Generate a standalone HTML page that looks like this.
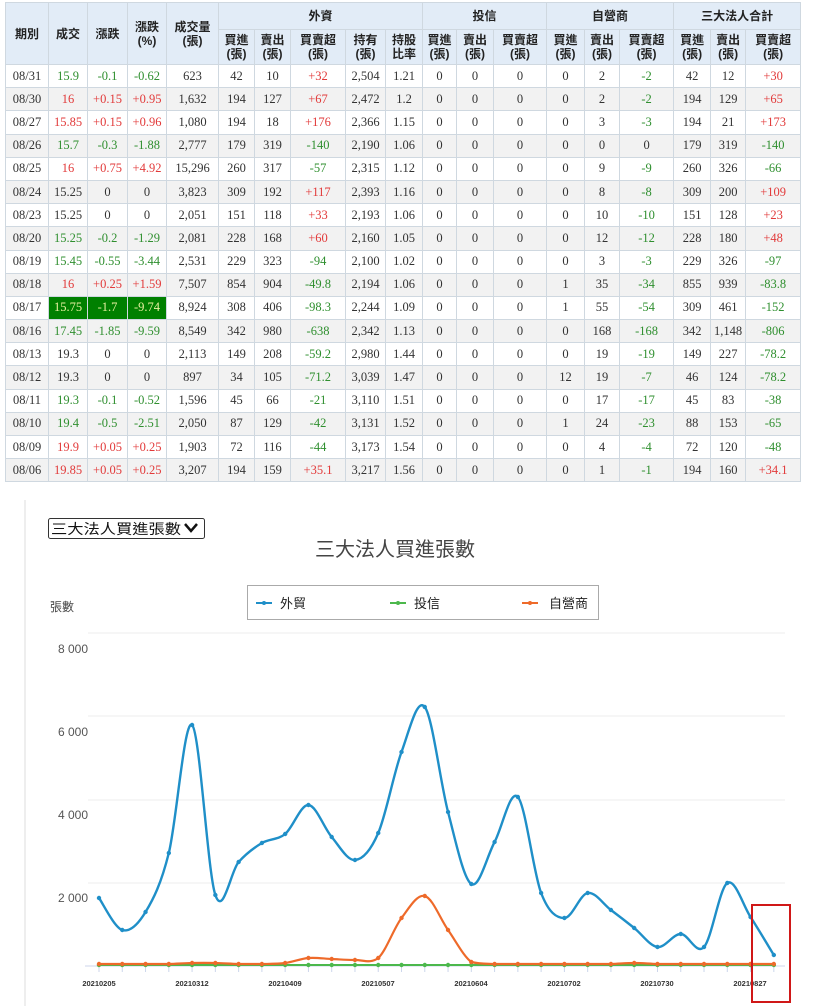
<!DOCTYPE html>
<html><head><meta charset="utf-8">
<style>
*{margin:0;padding:0;box-sizing:border-box}
body{width:819px;height:1006px;background:#fff;position:relative;overflow:hidden;font-family:"Liberation Serif","Noto Serif CJK SC",serif}
table{position:absolute;left:5px;top:2px;width:795px;border-collapse:collapse;table-layout:fixed;font-size:12.5px;color:#333}
td,th{border:1px solid #cfd8e0;text-align:center;padding:0;white-space:nowrap;overflow:hidden}
th{background:#e2ecf7;font-family:"Liberation Sans","Noto Sans CJK TC",sans-serif;font-weight:bold;font-size:12px;line-height:14px;color:#222}
tr.h1 th{height:27px}
tr.h2 th{height:35px}
tbody td{height:23.2px}
tbody tr:nth-child(even) td{background:#f2f2f2}
.r{color:#e23a3a}.g{color:#2f8f2f}
td.G{background:#008000!important;color:#e8f0a0}
svg text{font-family:"Liberation Sans","Noto Sans CJK TC",sans-serif}
</style></head><body>
<table>
<colgroup><col style="width:43px"><col style="width:39px"><col style="width:40px"><col style="width:39px"><col style="width:52px"><col style="width:36px"><col style="width:36px"><col style="width:55px"><col style="width:40px"><col style="width:37px"><col style="width:34px"><col style="width:37px"><col style="width:53px"><col style="width:38px"><col style="width:35px"><col style="width:54px"><col style="width:37px"><col style="width:35px"><col style="width:55px"></colgroup>
<thead>
<tr class="h1"><th rowspan="2">期別</th><th rowspan="2">成交</th><th rowspan="2">漲跌</th><th rowspan="2">漲跌<br>(%)</th><th rowspan="2">成交量<br>(張)</th><th colspan="5">外資</th><th colspan="3">投信</th><th colspan="3">自營商</th><th colspan="3">三大法人合計</th></tr>
<tr class="h2"><th>買進<br>(張)</th><th>賣出<br>(張)</th><th>買賣超<br>(張)</th><th>持有<br>(張)</th><th>持股<br>比率</th><th>買進<br>(張)</th><th>賣出<br>(張)</th><th>買賣超<br>(張)</th><th>買進<br>(張)</th><th>賣出<br>(張)</th><th>買賣超<br>(張)</th><th>買進<br>(張)</th><th>賣出<br>(張)</th><th>買賣超<br>(張)</th></tr>
</thead>
<tbody>
<tr><td>08/31</td><td class="g">15.9</td><td class="g">-0.1</td><td class="g">-0.62</td><td>623</td><td>42</td><td>10</td><td class="r">+32</td><td>2,504</td><td>1.21</td><td>0</td><td>0</td><td>0</td><td>0</td><td>2</td><td class="g">-2</td><td>42</td><td>12</td><td class="r">+30</td></tr>
<tr><td>08/30</td><td class="r">16</td><td class="r">+0.15</td><td class="r">+0.95</td><td>1,632</td><td>194</td><td>127</td><td class="r">+67</td><td>2,472</td><td>1.2</td><td>0</td><td>0</td><td>0</td><td>0</td><td>2</td><td class="g">-2</td><td>194</td><td>129</td><td class="r">+65</td></tr>
<tr><td>08/27</td><td class="r">15.85</td><td class="r">+0.15</td><td class="r">+0.96</td><td>1,080</td><td>194</td><td>18</td><td class="r">+176</td><td>2,366</td><td>1.15</td><td>0</td><td>0</td><td>0</td><td>0</td><td>3</td><td class="g">-3</td><td>194</td><td>21</td><td class="r">+173</td></tr>
<tr><td>08/26</td><td class="g">15.7</td><td class="g">-0.3</td><td class="g">-1.88</td><td>2,777</td><td>179</td><td>319</td><td class="g">-140</td><td>2,190</td><td>1.06</td><td>0</td><td>0</td><td>0</td><td>0</td><td>0</td><td>0</td><td>179</td><td>319</td><td class="g">-140</td></tr>
<tr><td>08/25</td><td class="r">16</td><td class="r">+0.75</td><td class="r">+4.92</td><td>15,296</td><td>260</td><td>317</td><td class="g">-57</td><td>2,315</td><td>1.12</td><td>0</td><td>0</td><td>0</td><td>0</td><td>9</td><td class="g">-9</td><td>260</td><td>326</td><td class="g">-66</td></tr>
<tr><td>08/24</td><td>15.25</td><td>0</td><td>0</td><td>3,823</td><td>309</td><td>192</td><td class="r">+117</td><td>2,393</td><td>1.16</td><td>0</td><td>0</td><td>0</td><td>0</td><td>8</td><td class="g">-8</td><td>309</td><td>200</td><td class="r">+109</td></tr>
<tr><td>08/23</td><td>15.25</td><td>0</td><td>0</td><td>2,051</td><td>151</td><td>118</td><td class="r">+33</td><td>2,193</td><td>1.06</td><td>0</td><td>0</td><td>0</td><td>0</td><td>10</td><td class="g">-10</td><td>151</td><td>128</td><td class="r">+23</td></tr>
<tr><td>08/20</td><td class="g">15.25</td><td class="g">-0.2</td><td class="g">-1.29</td><td>2,081</td><td>228</td><td>168</td><td class="r">+60</td><td>2,160</td><td>1.05</td><td>0</td><td>0</td><td>0</td><td>0</td><td>12</td><td class="g">-12</td><td>228</td><td>180</td><td class="r">+48</td></tr>
<tr><td>08/19</td><td class="g">15.45</td><td class="g">-0.55</td><td class="g">-3.44</td><td>2,531</td><td>229</td><td>323</td><td class="g">-94</td><td>2,100</td><td>1.02</td><td>0</td><td>0</td><td>0</td><td>0</td><td>3</td><td class="g">-3</td><td>229</td><td>326</td><td class="g">-97</td></tr>
<tr><td>08/18</td><td class="r">16</td><td class="r">+0.25</td><td class="r">+1.59</td><td>7,507</td><td>854</td><td>904</td><td class="g">-49.8</td><td>2,194</td><td>1.06</td><td>0</td><td>0</td><td>0</td><td>1</td><td>35</td><td class="g">-34</td><td>855</td><td>939</td><td class="g">-83.8</td></tr>
<tr><td>08/17</td><td class="G">15.75</td><td class="G">-1.7</td><td class="G">-9.74</td><td>8,924</td><td>308</td><td>406</td><td class="g">-98.3</td><td>2,244</td><td>1.09</td><td>0</td><td>0</td><td>0</td><td>1</td><td>55</td><td class="g">-54</td><td>309</td><td>461</td><td class="g">-152</td></tr>
<tr><td>08/16</td><td class="g">17.45</td><td class="g">-1.85</td><td class="g">-9.59</td><td>8,549</td><td>342</td><td>980</td><td class="g">-638</td><td>2,342</td><td>1.13</td><td>0</td><td>0</td><td>0</td><td>0</td><td>168</td><td class="g">-168</td><td>342</td><td>1,148</td><td class="g">-806</td></tr>
<tr><td>08/13</td><td>19.3</td><td>0</td><td>0</td><td>2,113</td><td>149</td><td>208</td><td class="g">-59.2</td><td>2,980</td><td>1.44</td><td>0</td><td>0</td><td>0</td><td>0</td><td>19</td><td class="g">-19</td><td>149</td><td>227</td><td class="g">-78.2</td></tr>
<tr><td>08/12</td><td>19.3</td><td>0</td><td>0</td><td>897</td><td>34</td><td>105</td><td class="g">-71.2</td><td>3,039</td><td>1.47</td><td>0</td><td>0</td><td>0</td><td>12</td><td>19</td><td class="g">-7</td><td>46</td><td>124</td><td class="g">-78.2</td></tr>
<tr><td>08/11</td><td class="g">19.3</td><td class="g">-0.1</td><td class="g">-0.52</td><td>1,596</td><td>45</td><td>66</td><td class="g">-21</td><td>3,110</td><td>1.51</td><td>0</td><td>0</td><td>0</td><td>0</td><td>17</td><td class="g">-17</td><td>45</td><td>83</td><td class="g">-38</td></tr>
<tr><td>08/10</td><td class="g">19.4</td><td class="g">-0.5</td><td class="g">-2.51</td><td>2,050</td><td>87</td><td>129</td><td class="g">-42</td><td>3,131</td><td>1.52</td><td>0</td><td>0</td><td>0</td><td>1</td><td>24</td><td class="g">-23</td><td>88</td><td>153</td><td class="g">-65</td></tr>
<tr><td>08/09</td><td class="r">19.9</td><td class="r">+0.05</td><td class="r">+0.25</td><td>1,903</td><td>72</td><td>116</td><td class="g">-44</td><td>3,173</td><td>1.54</td><td>0</td><td>0</td><td>0</td><td>0</td><td>4</td><td class="g">-4</td><td>72</td><td>120</td><td class="g">-48</td></tr>
<tr><td>08/06</td><td class="r">19.85</td><td class="r">+0.05</td><td class="r">+0.25</td><td>3,207</td><td>194</td><td>159</td><td class="r">+35.1</td><td>3,217</td><td>1.56</td><td>0</td><td>0</td><td>0</td><td>0</td><td>1</td><td class="g">-1</td><td>194</td><td>160</td><td class="r">+34.1</td></tr>
</tbody></table>

<svg width="819" height="1006" style="position:absolute;left:0;top:0" xmlns="http://www.w3.org/2000/svg">
<line x1="25" y1="500" x2="25" y2="1006" stroke="#ddd"/>
<rect x="48.5" y="518.5" width="156" height="20" fill="#fff" stroke="#333" rx="2"/>
<text x="51" y="534" font-size="14" fill="#111" textLength="130" lengthAdjust="spacingAndGlyphs">三大法人買進張數</text>
<path d="M185 524 l6 7 l6 -7" stroke="#111" stroke-width="2.5" fill="none"/>
<text x="395" y="556" font-size="20" fill="#444" text-anchor="middle">三大法人買進張數</text>
<text x="50" y="611" font-size="12" fill="#444">張數</text>
<rect x="247.5" y="585.5" width="351" height="34" fill="#fff" stroke="#aaa"/>
<line x1="256" y1="603" x2="272" y2="603" stroke="#1f8fc8" stroke-width="2"/><circle cx="264" cy="603" r="2" fill="#1f8fc8"/>
<text x="280" y="608" font-size="13" fill="#222">外貿</text>
<line x1="390" y1="603" x2="406" y2="603" stroke="#4cb84c" stroke-width="2"/><circle cx="398" cy="603" r="2" fill="#4cb84c"/>
<text x="414" y="608" font-size="13" fill="#222">投信</text>
<line x1="522" y1="603" x2="538" y2="603" stroke="#ee6a2a" stroke-width="2"/><circle cx="530" cy="603" r="2" fill="#ee6a2a"/>
<text x="549" y="608" font-size="13" fill="#222">自營商</text>
<g stroke="#ececec"><line x1="88" y1="633" x2="785" y2="633"/><line x1="88" y1="716" x2="785" y2="716"/><line x1="88" y1="800" x2="785" y2="800"/><line x1="88" y1="883" x2="785" y2="883"/></g>
<line x1="85" y1="966" x2="785" y2="966" stroke="#ccd6eb"/>
<g font-size="12" fill="#555" text-anchor="end"><text x="88" y="653">8 000</text><text x="88" y="736">6 000</text><text x="88" y="819">4 000</text><text x="88" y="902">2 000</text></g>
<g id="ticks" stroke="#ccd6eb"></g>
<g font-size="7.5" fill="#333" text-anchor="middle" font-weight="bold"><text x="99" y="986">20210205</text><text x="192" y="986">20210312</text><text x="285" y="986">20210409</text><text x="378" y="986">20210507</text><text x="471" y="986">20210604</text><text x="564" y="986">20210702</text><text x="657" y="986">20210730</text><text x="750" y="986">20210827</text></g>
<path id="pg" fill="none" stroke="#4cb84c" stroke-width="2" d="M99 965 L774 965"/>
<path id="po" fill="none" stroke="#ee6a2a" stroke-width="2.2" d="M99 964 L774 964"/>
<path id="pb" fill="none" stroke="#1f8fc8" stroke-width="2.4" d="M99 898 L774 955"/>
<g id="dots"></g>
<rect x="752" y="905" width="38" height="97" fill="none" stroke="#d01818" stroke-width="2"/>
</svg>
<script>
var B=[898,930,912,853,725,895,862,843,834,805,837,860,833,752,707,812,884,842,797,893,918,893,910,928,947,934,947,883,917,955];
var O=[964,964,964,964,963,963,964,964,963,958,959,960,958,918,896,930,962,964,964,964,964,964,964,963,964,964,964,964,964,964];
var G=[];for(var i=0;i<30;i++)G.push(965);
function X(i){return 99+23.27*i}
function path(a,mx){var d="M"+X(0)+" "+a[0];for(var i=0;i<a.length-1;i++){var p0=a[Math.max(i-1,0)],p1=a[i],p2=a[i+1],p3=a[Math.min(i+2,a.length-1)];var x0=X(Math.max(i-1,0)),x1=X(i),x2=X(i+1),x3=X(Math.min(i+2,a.length-1));var c1=p1+(p2-p0)/6,c2=p2-(p3-p1)/6;if(mx){c1=Math.min(c1,mx);c2=Math.min(c2,mx);}d+=" C"+(x1+(x2-x0)/6)+" "+c1+" "+(x2-(x3-x1)/6)+" "+c2+" "+x2+" "+p2;}return d}
document.getElementById("pb").setAttribute("d",path(B));
document.getElementById("po").setAttribute("d",path(O,964));
document.getElementById("pg").setAttribute("d",path(G));
var ns="http://www.w3.org/2000/svg",dots=document.getElementById("dots"),ticks=document.getElementById("ticks");
function c(x,y,col){var e=document.createElementNS(ns,"circle");e.setAttribute("cx",x);e.setAttribute("cy",y);e.setAttribute("r",2.2);e.setAttribute("fill",col);dots.appendChild(e)}
for(var i=0;i<30;i++){var l=document.createElementNS(ns,"line");l.setAttribute("x1",X(i));l.setAttribute("x2",X(i));l.setAttribute("y1",966);l.setAttribute("y2",972);ticks.appendChild(l);c(X(i),G[i],"#4cb84c");c(X(i),O[i],"#ee6a2a");c(X(i),B[i],"#1f8fc8");}
</script>
</body></html>
